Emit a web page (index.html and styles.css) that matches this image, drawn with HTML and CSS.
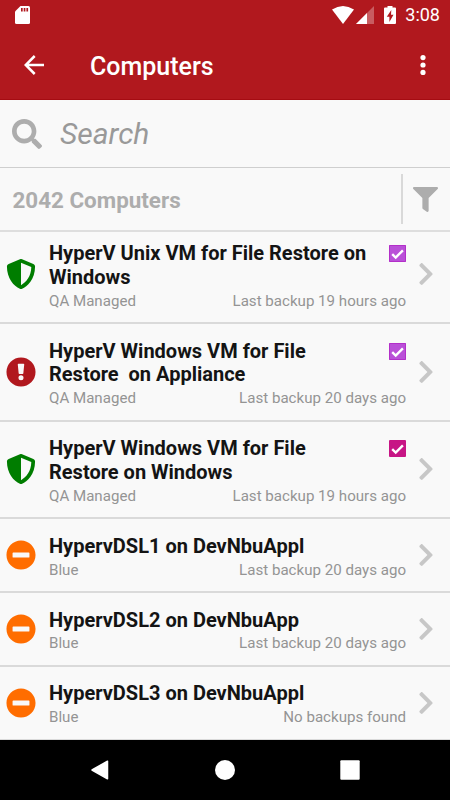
FILE: index.html
```html
<!DOCTYPE html>
<html lang="en">
<head>
  <meta charset="UTF-8" />
  <meta name="viewport" content="width=device-width, initial-scale=1.0"/>
  <title>Computers</title>
  <link rel="stylesheet" href="styles.css">
</head>
<body>

  <!-- shared icons -->
  <svg class="sprite">
    <symbol id="shield" viewBox="0 0 512 512">
      <path d="M466.5 83.7l-192-80a48.15 48.15 0 0 0-36.9 0l-192 80C27.7 91.1 16 108.6 16 128c0 198.5 114.5 335.7 221.5 380.3 11.8 4.9 25.1 4.9 36.9 0C360.1 472.6 496 349.3 496 128c0-19.4-11.7-36.9-29.5-44.3zM256.1 446.3l-.1-381 175.9 73.3c-3.3 151.4-82.1 261.1-175.8 307.7z"/>
    </symbol>
    <symbol id="alert" viewBox="0 0 512 512">
      <path d="M256 8a248 248 0 1 0 0 496 248 248 0 1 0 0-496zM212 116h88q12 0 11 12l-15 148q-1 12-12 12h-56q-11 0-12-12l-15-148q-1-12 11-12zM256 312a43 43 0 1 1 0 86 43 43 0 1 1 0-86z" fill-rule="evenodd"/>
    </symbol>
    <symbol id="minus" viewBox="0 0 512 512">
      <path d="M256 8C119 8 8 119 8 256s111 248 248 248 248-111 248-248S393 8 256 8zM124 300c-6.6 0-12-5.4-12-12v-64c0-6.6 5.4-12 12-12h264c6.6 0 12 5.4 12 12v64c0 6.6-5.4 12-12 12H124z"/>
    </symbol>
    <symbol id="chevron" viewBox="0 0 320 512">
      <path d="M285.476 272.971L91.132 467.314c-9.373 9.373-24.569 9.373-33.941 0l-22.667-22.667c-9.357-9.357-9.375-24.522-.04-33.901L188.505 256 34.484 101.255c-9.335-9.379-9.317-24.544.04-33.901l22.667-22.667c9.373-9.373 24.569-9.373 33.941 0L285.475 239.03c9.373 9.372 9.373 24.568.001 33.941z"/>
    </symbol>
    <symbol id="check" viewBox="0 0 17 17">
      <path d="M3.2 9.2l3.5 3.3 7.2-7.2" fill="none" stroke="#fff" stroke-width="2.4"/>
    </symbol>
  </svg>

  <header class="header">
    <div class="status">
      <svg class="sd" viewBox="0 0 15 18">
        <path fill="#fff" d="M5.5 0H13.5A1.5 1.5 0 0 1 15 1.5v15a1.5 1.5 0 0 1-1.5 1.5h-12A1.5 1.5 0 0 1 0 16.5V5.5z"/>
        <path fill="#b1181e" d="M6 2h1.7v3.5H6zM8.7 2h1.7v3.5H8.7zM11.4 2h1.7v3.5h-1.7z"/>
      </svg>
      <svg class="wifi" viewBox="0 0 22 18">
        <path fill="#fff" d="M0 3.5Q11-3.5 22 3.5L11 18z"/>
      </svg>
      <svg class="signal" viewBox="0 0 18 18">
        <path fill="#fff" opacity=".3" d="M18 0v18H0z"/>
        <path fill="#fff" d="M11 7v11H0z"/>
      </svg>
      <svg class="battery" viewBox="0 0 12 18">
        <path fill="#fff" d="M3.5 0h5v1.6H11q1 0 1 1V17q0 1-1 1H1q-1 0-1-1V2.6q0-1 1-1h2.5z"/>
        <path fill="#b1181e" d="M7.3 4L2.8 10.7h2.6v5.3L9.5 8.7H7z"/>
      </svg>
      <span class="time">3:08</span>
    </div>
    <div class="toolbar">
      <svg class="back" viewBox="0 0 20 20">
        <path d="M20 10H2M10.7 1L1.7 10l9 9" fill="none" stroke="#fff" stroke-width="2.5"/>
      </svg>
      <h1>Computers</h1>
      <svg class="more" viewBox="0 0 6 20" fill="#fff">
        <circle cx="3" cy="2.6" r="2.6"/>
        <circle cx="3" cy="10" r="2.6"/>
        <circle cx="3" cy="17.4" r="2.6"/>
      </svg>
    </div>
  </header>

  <div class="search">
    <svg viewBox="0 0 512 512">
      <path d="M505 442.7L405.3 343c-4.5-4.5-10.6-7-17-7H372c27.6-35.3 44-79.7 44-128C416 93.1 322.9 0 208 0S0 93.1 0 208s93.1 208 208 208c48.3 0 92.7-16.4 128-44v16.3c0 6.4 2.5 12.5 7 17l99.7 99.7c9.4 9.4 24.6 9.4 33.9 0l28.3-28.3c9.4-9.4 9.4-24.6.1-34zM208 336c-70.7 0-128-57.2-128-128 0-70.7 57.2-128 128-128 70.7 0 128 57.2 128 128 0 70.7-57.2 128-128 128z"/>
    </svg>
    <span>Search</span>
  </div>

  <div class="summary">
    <span class="count">2042 Computers</span>
    <div class="filter">
      <svg viewBox="0 0 512 512">
        <path d="M487.976 0H24.028C2.71 0-8.047 25.866 7.058 40.971L192 225.941V432c0 7.831 3.821 15.17 10.237 19.662l80 55.98C298.02 518.69 320 507.493 320 487.98V225.941l184.947-184.97C520.021 25.896 509.338 0 487.976 0z"/>
      </svg>
    </div>
  </div>

  <main class="list">
    <div class="row">
      <svg class="state green"><use href="#shield"/></svg>
      <div class="info">
        <div class="top">
          <h2>HyperV Unix VM for File Restore on Windows</h2>
          <svg class="box violet"><use href="#check"/></svg>
        </div>
        <div class="sub"><span>QA Managed</span><span>Last backup 19 hours ago</span></div>
      </div>
      <svg class="chevron"><use href="#chevron"/></svg>
    </div>
    <div class="row">
      <svg class="state red"><use href="#alert"/></svg>
      <div class="info">
        <div class="top">
          <h2>HyperV Windows VM for File<br>Restore&nbsp; on Appliance</h2>
          <svg class="box violet"><use href="#check"/></svg>
        </div>
        <div class="sub"><span>QA Managed</span><span>Last backup 20 days ago</span></div>
      </div>
      <svg class="chevron"><use href="#chevron"/></svg>
    </div>
    <div class="row">
      <svg class="state green"><use href="#shield"/></svg>
      <div class="info">
        <div class="top">
          <h2>HyperV Windows VM for File<br>Restore on Windows</h2>
          <svg class="box magenta"><use href="#check"/></svg>
        </div>
        <div class="sub"><span>QA Managed</span><span>Last backup 19 hours ago</span></div>
      </div>
      <svg class="chevron"><use href="#chevron"/></svg>
    </div>
    <div class="row">
      <svg class="state orange"><use href="#minus"/></svg>
      <div class="info">
        <div class="top"><h2>HypervDSL1 on DevNbuAppl</h2></div>
        <div class="sub"><span>Blue</span><span>Last backup 20 days ago</span></div>
      </div>
      <svg class="chevron"><use href="#chevron"/></svg>
    </div>
    <div class="row">
      <svg class="state orange"><use href="#minus"/></svg>
      <div class="info">
        <div class="top"><h2>HypervDSL2 on DevNbuApp</h2></div>
        <div class="sub"><span>Blue</span><span>Last backup 20 days ago</span></div>
      </div>
      <svg class="chevron"><use href="#chevron"/></svg>
    </div>
    <div class="row">
      <svg class="state orange"><use href="#minus"/></svg>
      <div class="info">
        <div class="top"><h2>HypervDSL3 on DevNbuAppl</h2></div>
        <div class="sub"><span>Blue</span><span>No backups found</span></div>
      </div>
      <svg class="chevron"><use href="#chevron"/></svg>
    </div>
  </main>

  <nav class="navbar">
    <svg viewBox="0 0 20 20"><path d="M17.5 1.2v17.6L2 10z" stroke="#fff" stroke-width="1.5" stroke-linejoin="round"/></svg>
    <svg viewBox="0 0 20 20"><circle cx="10" cy="10" r="10"/></svg>
    <svg viewBox="0 0 20 20"><rect x=".3" y=".3" width="19.4" height="19.4" rx="1"/></svg>
  </nav>

</body>
</html>
```
FILE: styles.css
```css
* {
  box-sizing: border-box;
}

body {
  margin: 0;
  width: 450px;
  height: 800px;
  display: flex;
  flex-direction: column;
  overflow: hidden;
  background: #f9f9f9;
  font-family: Roboto, sans-serif;
}

svg {
  display: block;
  flex: none;
}

h1, h2 {
  margin: 0;
}

.sprite {
  width: 0;
  height: 0;
  position: absolute;
}

.header {
  height: 100px;
  flex: none;
  background: #b1181e;
  border-bottom: 1px solid #a50c12;
  color: #fff;
}

.status {
  height: 30px;
  padding: 0 10px 0 15px;
  display: flex;
  align-items: center;
}

.sd {
  width: 15px;
  height: 18px;
  margin-right: auto;
}

.wifi {
  width: 22px;
  height: 18px;
}

.signal {
  width: 18px;
  height: 18px;
  margin-left: 2px;
}

.battery {
  width: 12px;
  height: 18px;
  margin-left: 10px;
}

.time {
  margin-left: 9px;
  font-size: 18px;
  line-height: 32px;
}

.toolbar {
  height: 70px;
  padding: 0 24px;
  display: flex;
  align-items: center;
}

.back {
  width: 20px;
  height: 20px;
}

.toolbar h1 {
  flex: 1;
  margin-left: 46px;
  padding-top: 2px;
  font-size: 25px;
  font-weight: 500;
}

.more {
  width: 6px;
  height: 20px;
}

.search {
  height: 68px;
  flex: none;
  padding: 0 12px;
  border-bottom: 1px solid #cfcfcf;
  display: flex;
  align-items: center;
  font-size: 30px;
  font-style: italic;
  color: #999;
}

.search svg {
  width: 30px;
  height: 30px;
  margin-right: 18px;
  fill: #adadad;
}

.summary {
  height: 64px;
  flex: none;
  padding-left: 12.5px;
  border-bottom: 2px solid #dedede;
  display: flex;
  align-items: center;
  justify-content: space-between;
}

.count {
  padding-top: 2px;
  font-size: 22.4px;
  font-weight: bold;
  color: #adadad;
}

.filter {
  width: 49px;
  height: 50px;
  padding-left: 10px;
  border-left: 2px solid #d9d9d9;
  display: flex;
  align-items: center;
}

.filter svg {
  width: 25px;
  height: 25px;
  fill: #adadad;
}

.list {
  flex: 1;
  min-height: 0;
  overflow: hidden;
}

.row {
  padding: 15.5px 16px 10.5px 6px;
  border-bottom: 2px solid #dadada;
  display: flex;
  align-items: center;
}

/* list is scrolled down a little */
.row:first-child {
  margin-top: -5.5px;
}

.state {
  width: 30px;
  height: 30px;
  margin-bottom: 5px;
}

.green {
  fill: #007d00;
}

.red {
  fill: #b1181e;
}

.orange {
  fill: #ff6d00;
}

.info {
  width: 357px;
  margin-left: 13px;
}

.top {
  display: flex;
  justify-content: space-between;
}

h2 {
  width: 330px;
  font-size: 20px;
  line-height: 23.8px;
  font-weight: bold;
  color: #141414;
}

.box {
  width: 17px;
  height: 17px;
  margin-top: 3px;
  border-radius: 1px;
}

.violet {
  background: #ba50d8;
  box-shadow: inset 0 0 0 1px #b32fc9;
}

.magenta {
  background: #c71585;
}

.sub {
  display: flex;
  justify-content: space-between;
  font-size: 15.1px;
  line-height: 22px;
  color: #949494;
}

.chevron {
  width: 16px;
  height: 26px;
  margin-left: 12px;
  margin-bottom: 5px;
  fill: #c7c7c7;
}

.navbar {
  height: 60px;
  flex: none;
  background: #000;
  display: flex;
  align-items: center;
  justify-content: center;
  gap: 105px;
}

.navbar svg {
  width: 20px;
  height: 20px;
  fill: #fff;
}
```
